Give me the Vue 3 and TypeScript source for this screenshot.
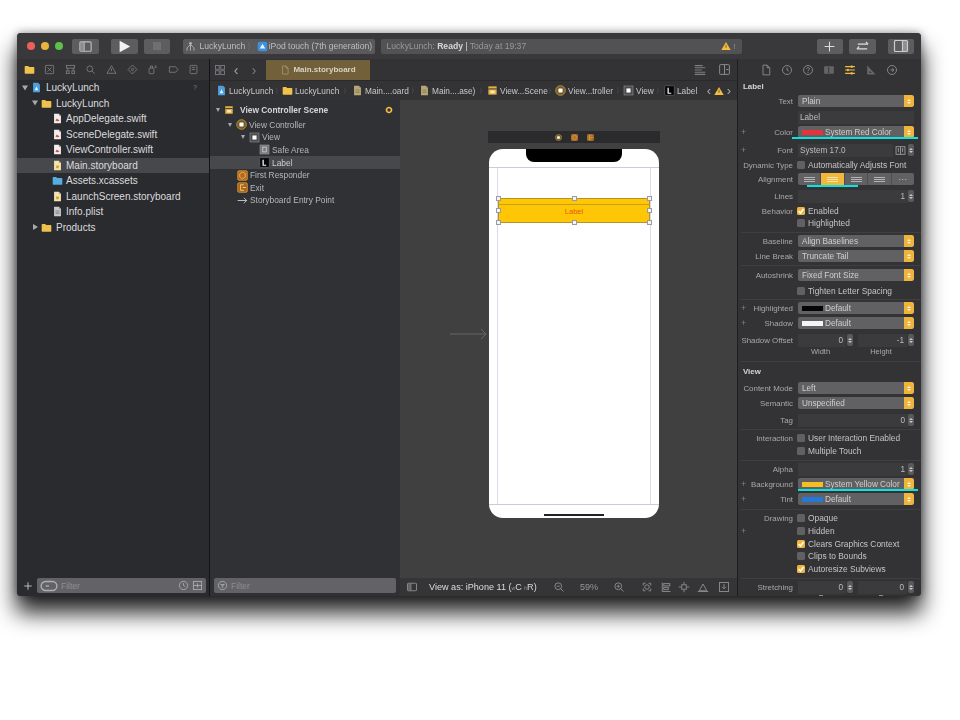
<script setup lang="ts">
import { computed, h } from 'vue'
import type { FunctionalComponent } from 'vue'

const S = 'fill="none" stroke="currentColor" stroke-width="1.2"'
const doc = (c: string, mark: string) =>
  `<path d="M3 1h7l3 3v11H3z" fill="${c}"/><path d="M10 1v3h3z" fill="#888"/>${mark}`
const ICONS: Record<string, string> = {
  folder: '<path d="M1 4a1 1 0 011-1h4l1.5 1.5H14a1 1 0 011 1V13a1 1 0 01-1 1H2a1 1 0 01-1-1z" fill="#f1c14d"/>',
  assets: '<path d="M1 4a1 1 0 011-1h4l1.5 1.5H14a1 1 0 011 1V13a1 1 0 01-1 1H2a1 1 0 01-1-1z" fill="#57ace0"/>',
  proj: doc('#4a9fe0', '<path d="M8 6l2.6 6H5.4z" fill="#e6f2fb"/>'),
  swift: doc('#f2eeee', '<path d="M5 11c2 1.5 5 1 6-1-1 .3-3-1-4-2z" fill="#dd4a3a"/>'),
  board: doc('#f3e3b2', '<rect x="6" y="8" width="4" height="4" fill="#d8a520"/>'),
  plist: doc('#c9c9cb', '<path d="M5 7h6M5 9h6M5 11h6" stroke="#777"/>'),
  docg: doc('#b9a877', '<path d="M5 7h6M5 9h6M5 11h6" stroke="#8a7a50"/>'),
  scene: '<rect x="2" y="2" width="12" height="12" fill="#e6b23f"/><rect x="2" y="5" width="12" height="1.5" fill="#3a3a3c"/><rect x="5" y="8" width="6" height="4" fill="#f7e9bf"/>',
  vc: '<circle cx="8" cy="8" r="7" fill="#6e5a2a" stroke="#e2ad3a"/><rect x="5" y="5" width="6" height="6" rx="1" fill="#fff"/>',
  view: '<rect x="1.5" y="1.5" width="13" height="13" fill="#4b4b4e" stroke="#8b8b8e"/><rect x="5" y="5" width="6" height="6" fill="#fff"/>',
  safe: '<rect x="1.5" y="1.5" width="13" height="13" fill="#77777a" stroke="#99999c"/><rect x="5.5" y="4.5" width="5" height="7" fill="none" stroke="#e5e5e5"/>',
  lab: '<rect x="1" y="1" width="14" height="14" rx="1" fill="#050505" stroke="#666"/><path d="M6 4v8h4.5" fill="none" stroke="#fff" stroke-width="1.8"/>',
  resp: '<rect x="1" y="1" width="14" height="14" rx="2" fill="#b5691d" stroke="#e8a63a"/><path d="M8 3l4 2.3v5L8 13l-4-2.7v-5z" fill="none" stroke="#f5c77a"/>',
  exit: '<rect x="1" y="1" width="14" height="14" rx="2" fill="#a9641a" stroke="#e8a63a"/><path d="M10 4H5v8h5M8 8h5" fill="none" stroke="#f5d08a" stroke-width="1.3"/>',
  arrow: '<path d="M1 8h13M10 4l4 4-4 4" fill="none" stroke="#cfcfcf" stroke-width="1.3"/>',
  warn: '<path d="M8 1.5L15.5 14.5H.5z" fill="#f3bd3d"/><rect x="7.4" y="6" width="1.2" height="5" fill="#5b4510"/>',
  hammer: '<path d="M8 2v3M8 5L3 10v4M8 5l5 5v4M8 5v9" fill="none" stroke="#b5b5b7" stroke-width="1.3"/><rect x="6" y="2" width="4" height="3" fill="#b5b5b7"/>',
  device: '<rect x="1" y="1" width="14" height="14" rx="3" fill="#3e8fdc"/><path d="M4 11l4-7 4 7z" fill="#e6f1fb"/>',
  sidebar: `<rect x="2" y="3" width="12" height="10" rx="1" ${S}/><path d="M6.5 3v10" ${S}/><rect x="2.6" y="3.6" width="3.4" height="8.8" fill="currentColor" opacity=".5"/>`,
  insp: `<rect x="1.5" y="2.5" width="13" height="11" rx="1" ${S}/><path d="M9.5 2.5v11" ${S}/><rect x="10" y="3" width="4" height="10" fill="currentColor" opacity=".45"/>`,
  swap: `<path d="M2 10.5h11M2 10.5l2.5-2.5M14 5.5H3M14 5.5L11.5 3" ${S}/>`,
  plus: `<path d="M8 2v12M2 8h12" fill="none" stroke="currentColor" stroke-width="1.3"/>`,
  xbox: `<rect x="2" y="2" width="12" height="12" rx="1" ${S}/><path d="M5 5l6 6M11 5l-6 6" ${S}/>`,
  tree: `<rect x="2" y="2" width="12" height="4" ${S}/><rect x="2" y="10" width="4" height="4" ${S}/><rect x="10" y="10" width="4" height="4" ${S}/><path d="M4 6v4M12 6v4" ${S}/>`,
  search: `<circle cx="7" cy="7" r="4.2" ${S}/><path d="M10 10l4 4" ${S}/>`,
  tri: `<path d="M8 2.5L14.5 13.5H1.5z" ${S}/><path d="M8 6.5v4" ${S}/>`,
  dia: `<path d="M8 1.5L14.5 8 8 14.5 1.5 8z" ${S}/><circle cx="8" cy="8" r="1.6" ${S}/>`,
  spray: `<rect x="3" y="6" width="7" height="8" rx="1" ${S}/><path d="M5 6V3h3v3M11 3h3M11 5h3" ${S}/>`,
  tag: `<path d="M2 4h9l3.5 4-3.5 4H2z" ${S}/>`,
  list: `<rect x="3" y="2" width="10" height="12" rx="1.5" ${S}/><path d="M5.5 5h5M5.5 8h5" ${S}/>`,
  grid: `<rect x="2" y="2" width="5" height="5" ${S}/><rect x="9" y="2" width="5" height="5" ${S}/><rect x="2" y="9" width="5" height="5" ${S}/><rect x="9" y="9" width="5" height="5" ${S}/>`,
  lines: `<path d="M2 3h9M2 5.5h12M2 8h8M2 10.5h12M2 13h12" ${S}/>`,
  addpane: `<rect x="2" y="2" width="12" height="12" rx="1" ${S}/><path d="M8 2v12M10 8h3" ${S}/>`,
  file: `<path d="M4 1.5h5.5L13 5v9.5H4z" ${S}/><path d="M9.5 1.5V5H13" ${S}/>`,
  clock: `<circle cx="8" cy="8" r="6" ${S}/><path d="M8 4.5V8l2.5 1.5" ${S}/>`,
  help: `<circle cx="8" cy="8" r="6" ${S}/><path d="M6.3 6.5a1.8 1.8 0 113 1.3c-.8.6-1.3.8-1.3 1.8M8 11v1" ${S}/>`,
  idcard: '<rect x="1.5" y="3" width="13" height="10" rx="1" fill="currentColor" opacity=".55"/><rect x="7" y="4" width="1.2" height="8" fill="#333"/>',
  sliders: '<path d="M1.5 3.5h13M1.5 8h13M1.5 12.5h13" stroke="#f0bc45" stroke-width="1.6"/><rect x="9" y="2" width="2.4" height="3" fill="#f0bc45"/><rect x="4" y="6.5" width="2.4" height="3" fill="#f0bc45"/><rect x="9" y="11" width="2.4" height="3" fill="#f0bc45"/>',
  ruler: '<path d="M3 2v12h11z" fill="currentColor" opacity=".6"/><path d="M6 9v3h3z" fill="#333"/>',
  conn: `<circle cx="8" cy="8" r="6" ${S}/><path d="M10.5 8H6M8 5.8L10.5 8 8 10.2" ${S}/>`,
  scope: `<path d="M3 6V3h3M10 3h3v3M13 10v3h-3M6 13H3v-3" ${S}/><circle cx="8" cy="8" r="3" ${S}/>`,
  zoomm: `<circle cx="7" cy="7" r="4.5" ${S}/><path d="M10.2 10.2L14 14M5 7h4" ${S}/>`,
  zoomp: `<circle cx="7" cy="7" r="4.5" ${S}/><path d="M10.2 10.2L14 14M5 7h4M7 5v4" ${S}/>`,
  align: `<path d="M3 2v12h11" ${S}/><rect x="5" y="3.5" width="8" height="3" ${S}/><rect x="5" y="8.5" width="6" height="3" ${S}/>`,
  pin: `<rect x="5" y="5" width="6" height="6" ${S}/><path d="M8 1v3M8 12v3M1 8h3M12 8h3" ${S}/>`,
  tri2: `<path d="M8 4l-5 9h10z" ${S}/><path d="M1 14h14" ${S}/>`,
  embed: `<rect x="2" y="2" width="12" height="12" ${S}/><path d="M8 4v6M5.5 7.8L8 10.3l2.5-2.5" ${S}/>`,
  filter: `<circle cx="8" cy="8" r="6" ${S}/><path d="M5 6.5h6M6 8.5h4M7 10.5h2" ${S}/>`,
  pill: `<rect x="1" y="4" width="14" height="8" rx="4" ${S}/><path d="M5 8h3" ${S}/>`,
  split: `<rect x="2" y="2" width="12" height="12" ${S}/><path d="M2 8h12M8 5v6" ${S}/>`,
  dotY: '<circle cx="8" cy="8" r="5" fill="none" stroke="#f0bc45" stroke-width="3.4"/>',
  tApart: `<rect x="1.5" y="2.5" width="13" height="11" ${S}/><path d="M8 2.5v11M4 5.5h2M5 5.5v5M10 5.5h2M11 5.5v5" ${S}/>`
}
const Ic: FunctionalComponent<{ name: string; size?: number }> = (p) =>
  h('svg', {
    class: 'ic',
    width: p.size ?? 11,
    height: p.size ?? 11,
    viewBox: '0 0 16 16',
    innerHTML: ICONS[p.name]
  })
Ic.props = ['name', 'size']

const navTabs = ['folder', 'xbox', 'tree', 'search', 'tri', 'dia', 'spray', 'tag', 'list']
const tree = [
  { d: 0, tri: 'open', icon: 'proj', text: 'LuckyLunch' },
  { d: 1, tri: 'open', icon: 'folder', text: 'LuckyLunch' },
  { d: 2, icon: 'swift', text: 'AppDelegate.swift' },
  { d: 2, icon: 'swift', text: 'SceneDelegate.swift' },
  { d: 2, icon: 'swift', text: 'ViewController.swift' },
  { d: 2, icon: 'board', text: 'Main.storyboard', sel: true },
  { d: 2, icon: 'assets', text: 'Assets.xcassets' },
  { d: 2, icon: 'board', text: 'LaunchScreen.storyboard' },
  { d: 2, icon: 'plist', text: 'Info.plist' },
  { d: 1, tri: 'closed', icon: 'folder', text: 'Products' }
]
const jump = [
  { icon: 'proj', text: 'LuckyLunch', w: 45, c: 8 },
  { icon: 'folder', text: 'LuckyLunch', w: 46, c: 11 },
  { icon: 'docg', text: 'Main....oard', w: 45, c: 9 },
  { icon: 'docg', text: 'Main....ase)', w: 45, c: 10 },
  { icon: 'scene', text: 'View...Scene', w: 47, c: 8 },
  { icon: 'vc', text: 'View...troller', w: 47, c: 8 },
  { icon: 'view', text: 'View', w: 18, c: 10 },
  { icon: 'lab', text: 'Label', w: 22, c: 5 }
]
const outline = [
  { pad: 6, tri: true, icon: 'scene', text: 'View Controller Scene', cls: 'head', h: 17 },
  { pad: 18, tri: true, icon: 'vc', text: 'View Controller', h: 13 },
  { pad: 31, tri: true, icon: 'view', text: 'View', h: 12.5 },
  { pad: 49, icon: 'safe', text: 'Safe Area', h: 12.5 },
  { pad: 49, icon: 'lab', text: 'Label', sel: true, h: 13 },
  { pad: 27, icon: 'resp', text: 'First Responder', h: 12.5 },
  { pad: 27, icon: 'exit', text: 'Exit', h: 12.5 },
  { pad: 27, icon: 'arrow', text: 'Storyboard Entry Point', h: 12.5 }
]
const inspTabs = ['file', 'clock', 'help', 'idcard', 'sliders', 'ruler', 'conn']
const handles = ['tl', 'tc', 'tg', 'ml', 'mg', 'bl', 'bc', 'bg']
const barRight = ['scope', 'align', 'pin', 'tri2', 'embed']

type Row = {
  y: number
  kind: string
  label?: string
  plus?: boolean
  text?: string
  on?: boolean
  swatch?: string
  a?: string
  b?: string
}
const raw: Row[] = [
  { y: 86, kind: 'head', text: 'Label' },
  { y: 101, kind: 'popup', label: 'Text', text: 'Plain' },
  { y: 117, kind: 'field', text: 'Label' },
  { y: 132, kind: 'popup', label: 'Color', plus: true, swatch: '#e6333b', text: 'System Red Color' },
  { y: 150, kind: 'font', label: 'Font', plus: true, text: 'System 17.0' },
  { y: 165, kind: 'check', label: 'Dynamic Type', text: 'Automatically Adjusts Font' },
  { y: 179, kind: 'seg', label: 'Alignment' },
  { y: 196, kind: 'num', label: 'Lines', text: '1' },
  { y: 211, kind: 'check', label: 'Behavior', on: true, text: 'Enabled' },
  { y: 223, kind: 'check', text: 'Highlighted' },
  { y: 232, kind: 'sep' },
  { y: 241, kind: 'popup', label: 'Baseline', text: 'Align Baselines' },
  { y: 256, kind: 'popup', label: 'Line Break', text: 'Truncate Tail' },
  { y: 265, kind: 'sep' },
  { y: 275, kind: 'popup', label: 'Autoshrink', text: 'Fixed Font Size' },
  { y: 291, kind: 'check', text: 'Tighten Letter Spacing' },
  { y: 299, kind: 'sep' },
  { y: 308, kind: 'popup', label: 'Highlighted', plus: true, swatch: '#050505', text: 'Default' },
  { y: 323, kind: 'popup', label: 'Shadow', plus: true, swatch: '#f4f4f4', text: 'Default' },
  { y: 340, kind: 'double', label: 'Shadow Offset', a: '0', b: '-1' },
  { y: 351, kind: 'sub', a: 'Width', b: 'Height' },
  { y: 361, kind: 'sep' },
  { y: 371, kind: 'head', text: 'View' },
  { y: 388, kind: 'popup', label: 'Content Mode', text: 'Left' },
  { y: 403, kind: 'popup', label: 'Semantic', text: 'Unspecified' },
  { y: 420, kind: 'num', label: 'Tag', text: '0' },
  { y: 429, kind: 'sep' },
  { y: 438, kind: 'check', label: 'Interaction', text: 'User Interaction Enabled' },
  { y: 451, kind: 'check', text: 'Multiple Touch' },
  { y: 460, kind: 'sep' },
  { y: 469, kind: 'num', label: 'Alpha', text: '1' },
  { y: 484, kind: 'popup', label: 'Background', plus: true, swatch: '#f5bf22', text: 'System Yellow Color' },
  { y: 499, kind: 'popup', label: 'Tint', plus: true, swatch: '#2678d8', text: 'Default' },
  { y: 509, kind: 'sep' },
  { y: 518, kind: 'check', label: 'Drawing', text: 'Opaque' },
  { y: 531, kind: 'check', plus: true, label: ' ', text: 'Hidden' },
  { y: 544, kind: 'check', on: true, text: 'Clears Graphics Context' },
  { y: 556, kind: 'check', text: 'Clips to Bounds' },
  { y: 569, kind: 'check', on: true, text: 'Autoresize Subviews' },
  { y: 578, kind: 'sep' },
  { y: 587, kind: 'double', label: 'Stretching', a: '0', b: '0' },
  { y: 596, kind: 'ticks' }
]
// Rows are 10px tall (1px for rules); each row's gap comes from its centre line in the inspector.
const rows = computed(() => {
  let bottom = 80
  return raw.map((r) => {
    const height = r.kind === 'sep' ? 1 : 10
    const top = r.kind === 'sep' ? r.y : r.y - 5
    const marginTop = top - bottom
    bottom = top + height
    return { ...r, gap: `${marginTop}px` }
  })
})
</script>

<template>
  <div class="page">
    <div class="win">
      <header class="bar">
        <span class="light red"></span><span class="light amber"></span><span class="light green"></span>
        <button class="tb side"><Ic name="sidebar" :size="15" /></button>
        <button class="tb play"><svg width="13" height="13" viewBox="0 0 16 16"><path d="M2 1l13 7-13 7z" fill="#f2f2f2" /></svg></button>
        <button class="tb stop"><span class="stopsq"></span></button>
        <div class="scheme">
          <Ic name="hammer" :size="11" /><span class="st1">LuckyLunch</span><span class="chev">〉</span>
          <Ic name="device" :size="11" /><span class="st2">iPod touch (7th generation)</span>
        </div>
        <div class="status">
          <span>LuckyLunch: <b>Ready</b> <b class="pipe">|</b> Today at 19:37</span>
          <span class="grow"></span><Ic name="warn" :size="10" /><span class="one">!</span>
        </div>
        <button class="tb add"><Ic name="plus" :size="13" /></button>
        <button class="tb swap"><Ic name="swap" :size="15" /></button>
        <button class="tb ins"><Ic name="insp" :size="16" /></button>
      </header>

      <div class="main">
        <aside class="nav">
          <div class="navtabs"><span v-for="n in navTabs" :key="n" class="navtab"><Ic :name="n" :size="11" /></span></div>
          <div class="tree">
            <div v-for="(r, i) in tree" :key="i" class="row" :class="[`d${r.d}`, { sel: r.sel }]">
              <span class="tw" :class="r.tri"></span><Ic :name="r.icon" :size="11" /><span class="tt">{{ r.text }}</span>
              <span v-if="i === 0" class="q">?</span>
            </div>
          </div>
          <div class="foot navfoot">
            <Ic class="fplus" name="plus" :size="10" />
            <div class="filt grow2"><Ic name="pill" :size="18" /><span class="ph">Filter</span><span class="grow"></span><Ic name="clock" :size="11" /><Ic name="split" :size="11" /></div>
          </div>
        </aside>

        <section class="ed">
          <div class="tabs">
            <Ic name="grid" :size="12" /><span class="arr l">‹</span><span class="arr r">›</span>
            <div class="tab"><Ic name="file" :size="10" /><span>Main.storyboard</span></div>
            <span class="grow"></span><Ic name="lines" :size="14" /><Ic class="pane" name="addpane" :size="13" />
          </div>
          <div class="jump">
            <template v-for="(j, i) in jump" :key="i">
              <Ic :name="j.icon" :size="11" /><span class="jt" :style="{ width: `${j.w}px` }">{{ j.text }}</span><span class="jc" :style="{ width: `${j.c}px` }"><template v-if="i < jump.length - 1">〉</template></span>
            </template>
            <span class="jarr">‹</span><Ic name="warn" :size="10" /><span class="jarr">›</span>
          </div>
          <div class="split">
            <div class="out">
              <div class="outrows">
                <div v-for="r in outline" :key="r.text" class="or" :class="[r.cls, { sel: r.sel }]" :style="{ height: `${r.h}px`, paddingLeft: `${r.pad}px` }">
                  <span v-if="r.tri" class="ot"></span><Ic :name="r.icon" :size="r.pad === 6 ? 10 : 11" /><span class="ol">{{ r.text }}</span>
                  <span v-if="r.cls" class="grow"></span><Ic v-if="r.cls" class="dot" name="dotY" :size="8" />
                </div>
              </div>
              <div class="foot outfoot"><div class="filt grow2"><Ic name="filter" :size="11" /><span class="ph">Filter</span></div></div>
            </div>
            <div class="cv">
              <div class="stage">
                <div class="scenebar">
                  <Ic name="vc" :size="7" /><Ic name="resp" :size="7" /><Ic name="exit" :size="7" />
                </div>
                <div class="phone">
                  <div class="notch"></div>
                  <div class="safeh">
                    <div class="safev">
                      <div class="lbl">
                        <span class="lbltxt">Label</span>
                        <i v-for="p in handles" :key="p" class="hd" :class="p"></i>
                      </div>
                    </div>
                  </div>
                  <div class="home"></div>
                </div>
                <svg class="entry" width="38" height="12" viewBox="0 0 38 12"><path d="M0 6h36M31 1l5 5-5 5" fill="none" stroke="#666" /></svg>
              </div>
              <div class="cbar">
                <Ic name="sidebar" :size="12" />
                <span class="viewas">View as: iPhone 11 (<small>w</small>C <small>h</small>R)</span>
                <Ic class="zm" name="zoomm" :size="12" /><span class="pct">59%</span><Ic class="zp" name="zoomp" :size="12" />
                <span class="cright"><Ic v-for="n in barRight" :key="n" :name="n" :size="12" /></span>
              </div>
            </div>
          </div>
        </section>

        <aside class="insp">
          <div class="itabs"><span v-for="n in inspTabs" :key="n" class="itab"><Ic :name="n" :size="12" /></span></div>
          <div class="irows">
            <template v-for="(r, i) in rows" :key="i">
              <div v-if="r.kind === 'sep'" class="rule" :style="{ marginTop: r.gap }"></div>
              <div v-else-if="r.kind === 'head'" class="irow ihead" :style="{ marginTop: r.gap }">{{ r.text }}</div>
              <div v-else class="irow" :style="{ marginTop: r.gap }">
                <span class="ilab"><span v-if="r.plus" class="iplus">+</span><span class="grow"></span>{{ r.label }}</span>
                <div v-if="r.kind === 'popup'" class="ctl popup">
                  <span v-if="r.swatch" class="sw" :style="{ background: r.swatch }"></span>
                  <span class="ptext">{{ r.text }}</span><span class="grow"></span>
                  <span class="stepy"><i></i><i class="dn"></i></span>
                </div>
                <div v-else-if="r.kind === 'field'" class="ctl field">{{ r.text }}</div>
                <div v-else-if="r.kind === 'font'" class="ctl fontrow">
                  <span class="field ffield">{{ r.text }}</span><Ic class="tap" name="tApart" :size="11" /><span class="step"><i></i><i class="dn"></i></span>
                </div>
                <div v-else-if="r.kind === 'check'" class="ctl chk">
                  <span class="box" :class="{ on: r.on }"><svg v-if="r.on" width="8" height="8" viewBox="0 0 16 16"><path d="M3 8l4 4 6-8" fill="none" stroke="#fff" stroke-width="3" /></svg></span>{{ r.text }}
                </div>
                <div v-else-if="r.kind === 'seg'" class="ctl seg">
                  <span v-for="n in 5" :key="n" class="cell" :class="{ act: n === 2 }"><i v-if="n < 5" class="gly"></i><i v-else class="dots">···</i></span>
                </div>
                <div v-else-if="r.kind === 'num'" class="ctl numrow">
                  <span class="field nf">{{ r.text }}</span><span class="step"><i></i><i class="dn"></i></span>
                </div>
                <div v-else-if="r.kind === 'double'" class="ctl dbl">
                  <span class="field nf">{{ r.a }}</span><span class="step"><i></i><i class="dn"></i></span>
                  <span class="field nf second">{{ r.b }}</span><span class="step"><i></i><i class="dn"></i></span>
                </div>
                <div v-else-if="r.kind === 'sub'" class="ctl subs"><span class="s1">{{ r.a }}</span><span class="s2">{{ r.b }}</span></div>
                <div v-else-if="r.kind === 'ticks'" class="ctl subs"><span class="s1"><i class="tick"></i></span><span class="s2"><i class="tick"></i></span></div>
              </div>
            </template>
          </div>
        </aside>
      </div>
    </div>
    <i class="cy c1"></i><i class="cy c2"></i><i class="cy c3"></i>
  </div>
</template>

<style>
html, body { margin: 0; background: #fff; }
</style>

<style scoped>
.page { position: relative; width: 960px; height: 720px; box-sizing: border-box; padding: 33px 39px 0 17px; overflow: hidden; background: #fff; font-family: "Liberation Sans", Arial, sans-serif; }
.shadowless { box-shadow: none; }
.win { width: 904px; height: 563px; display: flex; flex-direction: column; background: #333; border-radius: 4px; overflow: hidden; box-shadow: 0 16px 22px 1px rgba(0,0,0,.85), 0 0 8px rgba(0,0,0,.4); color: #d6d6d8; }
.bar, .main { filter: blur(.45px); }
button { border: 0; padding: 0; font: inherit; }
.grow { flex: 1; }
.ic { display: block; flex: none; }

.bar { height: 26px; flex: none; display: flex; align-items: center; padding-left: 9.5px; background: #39393b; box-sizing: border-box; }
.light { width: 8.5px; height: 8.5px; border-radius: 50%; margin-right: 5.5px; flex: none; }
.red { background: #ee5f5a; } .amber { background: #e8b53e; } .green { background: #5cc24a; }
.tb { height: 15px; background: #5d5d5f; border-radius: 2px; color: #bdbdbf; display: flex; align-items: center; justify-content: center; flex: none; }
.side { width: 27px; margin-left: 3px; }
.play { width: 27px; margin-left: 12px; }
.stop { width: 26px; margin-left: 6px; }
.stopsq { width: 8px; height: 8px; background: #6f6f71; }
.scheme { width: 192px; height: 15px; margin-left: 13px; background: #5a5a5c; border-radius: 2px; display: flex; align-items: center; box-sizing: border-box; padding-left: 2px; font-size: 8.6px; color: #bdbdbf; flex: none; white-space: nowrap; }
.st1 { margin-left: 4px; width: 46px; }
.chev { width: 11px; font-size: 8px; text-align: center; color: #8a8a8c; }
.st2 { margin-left: 1px; }
.status { width: 361px; height: 15px; margin-left: 6px; background: #525254; border-radius: 2px; display: flex; align-items: center; box-sizing: border-box; padding: 0 3px 0 6px; font-size: 8.6px; color: #98989a; flex: none; white-space: nowrap; }
.status b { color: #d8d8da; } .status .pipe { font-weight: 400; }
.one { width: 8px; text-align: center; font-size: 7px; }
.add { width: 26px; margin-left: 75px; color: #ddd; }
.swap { width: 27px; margin-left: 6px; color: #ddd; }
.ins { width: 26px; margin-left: 12px; color: #ccc; }

.main { flex: 1; display: flex; min-height: 0; }
.nav { width: 192px; flex: none; display: flex; flex-direction: column; background: #2a2b2f; border-right: 1px solid #141416; }
.navtabs { height: 21px; flex: none; display: flex; align-items: center; padding-left: 6.5px; background: #333336; color: #808083; }
.navtab { width: 21px; display: flex; justify-content: flex-start; }
.tree { flex: 1; font-size: 10px; color: #dcdcde; }
.row { height: 15.5px; display: flex; align-items: center; white-space: nowrap; }
.row.sel { background: #47484b; }
.d0 { padding-left: 5px; } .d1 { padding-left: 15px; } .d2 { padding-left: 35px; }
.tw { height: 0; flex: none; width: 9px; }
.tw.open::before { content: ""; display: block; width: 0; height: 0; border-left: 3px solid transparent; border-right: 3px solid transparent; border-top: 5px solid #a9a9ab; transform: translateY(-2.5px); }
.tw.closed::before { content: ""; display: block; width: 0; height: 0; border-top: 3px solid transparent; border-bottom: 3px solid transparent; border-left: 5px solid #a9a9ab; transform: translate(1px,-3px); }
.tt { margin-left: 4px; }
.d2 .tt { margin-left: 3px; }
.d2 .tw { display: none; }
.q { margin-left: auto; margin-right: 12px; font-size: 7px; color: #7c7c7e; }
.foot { height: 18px; flex: none; display: flex; align-items: flex-start; box-sizing: border-box; }
.navfoot { padding: 0 3px 0 6px; background: #2a2b2f; }
.fplus { color: #d8d8d8; margin: 3px 4px 0 0; }
.filt { height: 15px; background: #636366; border-radius: 2px; display: flex; align-items: center; gap: 3px; padding: 0 3px; font-size: 8.5px; color: #8e8e91; box-sizing: border-box; }
.filt .ic { color: #b0b0b3; }
.grow2 { flex: 1; }
.ph { color: #8f8f92; }

.ed { flex: 1; min-width: 0; display: flex; flex-direction: column; border-right: 1px solid #1e1e20; }
.tabs { height: 21px; flex: none; display: flex; align-items: center; padding: 0 6px 0 4px; background: #333336; color: #7d7d80; }
.arr { font-size: 14px; line-height: 12px; text-align: center; }
.arr.l { width: 16px; margin-left: 2px; color: #a8a8aa; } .arr.r { width: 16px; margin-left: 2px; }
.tab { width: 104px; height: 20px; margin-left: 4px; background: #72603a; display: flex; align-items: center; justify-content: center; gap: 3px; font-size: 8px; font-weight: 700; color: #d8d2c2; flex: none; }
.tab .ic { color: #a99a78; }
.pane { margin-left: 11px; color: #8e8e91; }
.jump { height: 20px; flex: none; display: flex; align-items: center; padding-left: 6px; background: #333336; font-size: 8.3px; color: #c8c8ca; white-space: nowrap; border-top: 1px solid #2a2a2c; box-sizing: border-box; }
.jt { margin-left: 2px; flex: none; }
.jc { font-size: 7px; text-align: center; color: #7c7c7e; flex: none; overflow: hidden; }
.jarr { width: 10px; text-align: center; font-size: 13px; line-height: 12px; color: #a8a8aa; flex: none; }
.split { flex: 1; display: flex; min-height: 0; }
.out { width: 190px; flex: none; display: flex; flex-direction: column; background: #303134; }
.outrows { flex: 1; padding-top: 1px; font-size: 8.4px; color: #b7b7b9; }
.or { display: flex; align-items: center; white-space: nowrap; box-sizing: border-box; }
.or.sel { background: #47484b; color: #d0d0d2; }
.or.head { font-weight: 700; color: #d6d6d8; padding-right: 7px; }
.ot { width: 8px; flex: none; }
.ot::before { content: ""; display: block; width: 0; height: 0; border-left: 2.5px solid transparent; border-right: 2.5px solid transparent; border-top: 4px solid #a9a9ab; }
.ol { margin-left: 2px; }
.head .ol { margin-left: 6px; }
.outfoot { padding: 0 4px; background: #303134; }
.cv { flex: 1; min-width: 0; display: flex; flex-direction: column; background: #404041; }
.stage { flex: 1; position: relative; box-sizing: border-box; padding: 31px 0 0 88px; min-height: 0; }
.scenebar { width: 172px; height: 12px; background: #2b2b2d; display: flex; align-items: center; justify-content: center; gap: 9px; }
.phone { width: 170px; height: 369px; margin: 6px 0 0 1px; background: #fff; border-radius: 14px; display: flex; flex-direction: column; overflow: hidden; }
.notch { width: 96px; height: 13px; margin: 0 auto; background: #000; border-radius: 0 0 8px 8px; flex: none; }
.safeh { height: 338px; margin-top: 5px; border-top: 1px solid #c9cbe2; border-bottom: 1px solid #c9cbe2; flex: none; box-sizing: border-box; }
.safev { height: 100%; margin: 0 8px; border-left: 1px solid #d9dbea; border-right: 1px solid #d9dbea; box-sizing: border-box; padding-top: 30px; }
.lbl { position: relative; height: 25px; background: #fec605; border: 1px solid #b5932c; box-sizing: border-box; display: flex; align-items: center; justify-content: center; }
.lbl::before { content: ""; position: absolute; left: 0; right: 0; top: 5px; height: 1px; background: #c89f18; }
.lbltxt { font-size: 7.5px; color: #ea5a12; margin-top: 1px; }
.hd { position: absolute; width: 5px; height: 5px; background: #f4f4f4; border: 1px solid #9a9aa4; box-sizing: border-box; }
.tl, .ml, .bl { left: -3px; }
.tc, .bc { left: calc(50% - 2.5px); }
.tg, .mg, .bg { right: -3px; }
.tl, .tc, .tg { top: -3px; }
.ml, .mg { top: calc(50% - 2.5px); }
.bl, .bc, .bg { bottom: -3px; }
.home { width: 60px; height: 2px; margin: 9px auto 0; background: #222; flex: none; }
.entry { position: absolute; left: 50px; top: 228px; }
.cbar { height: 18px; flex: none; display: flex; align-items: center; background: #353537; color: #8f8f92; padding-left: 6px; box-sizing: border-box; font-size: 9.1px; }
.viewas { margin-left: 11px; color: #dcdcde; white-space: nowrap; width: 113px; flex: none; }
.viewas small { font-size: 5px; color: #999; }
.zm { margin-left: 11px; }
.pct { margin-left: 15px; width: 19px; flex: none; color: #98989a; }
.zp { margin-left: 14px; }
.cright { margin-left: 16px; display: flex; gap: 6.7px; }
.cright .ic:last-child { margin-left: 2px; }

.insp { width: 183px; flex: none; display: flex; flex-direction: column; background: #333336; overflow: hidden; }
.itabs { height: 21px; flex: none; display: flex; align-items: center; padding-left: 22px; color: #8c8c8f; }
.itab { width: 21px; flex: none; display: block; }
.irows { flex: 1; font-size: 7.9px; color: #a9a9ab; min-height: 0; }
.irow { height: 10px; display: flex; align-items: center; white-space: nowrap; }
.ihead { padding-left: 5px; font-weight: 700; color: #d6d6d8; }
.rule { height: 1px; margin-left: 3px; background: #3f3f42; }
.ilab { width: 55px; flex: none; display: flex; align-items: center; justify-content: flex-end; color: #a9a9ab; padding-left: 3px; box-sizing: border-box; }
.iplus { color: #7f7f82; font-size: 9px; }
.ctl { width: 116px; margin-left: 5px; height: 13px; flex: none; display: flex; align-items: center; box-sizing: border-box; }
.popup { background: #616164; border-radius: 2px; padding-left: 4px; color: #cfcfd1; font-size: 8.2px; height: 12.5px; overflow: hidden; }
.sw { width: 21px; height: 5px; flex: none; margin-right: 2px; }
.stepy { width: 10px; height: 100%; background: #efb43c; flex: none; border-radius: 0 2px 2px 0; display: flex; flex-direction: column; align-items: center; justify-content: center; gap: 1px; }
.stepy i, .step i { display: block; width: 0; height: 0; border-left: 2px solid transparent; border-right: 2px solid transparent; border-bottom: 2.5px solid #fff4d8; }
.stepy .dn, .step .dn { border-bottom: 0; border-top: 2.5px solid #fff4d8; }
.step { width: 6px; height: 12px; background: #5a5a5d; flex: none; border-radius: 2px; display: flex; flex-direction: column; align-items: center; justify-content: center; gap: 1px; }
.step i { border-bottom-color: #c8c8ca; } .step .dn { border-top-color: #c8c8ca; }
.field { background: #3b3b3e; color: #bdbdbf; padding: 0 3px; font-size: 8.2px; display: flex; align-items: center; height: 13px; box-sizing: border-box; }
.ctl.field { padding-left: 2px; }
.fontrow .ffield { flex: 1; padding-left: 2px; height: 13px; }
.tap { color: #a8a8aa; margin: 0 2px; }
.chk { gap: 3px; color: #c4c4c6; font-size: 8.4px; margin-left: 4px; }
.box { width: 8px; height: 8px; background: #616164; border-radius: 1.5px; flex: none; display: flex; align-items: center; justify-content: center; }
.box.on { background: #efb43c; }
.seg { background: #616164; border-radius: 2px; overflow: hidden; height: 12px; }
.cell { flex: 1; height: 100%; display: flex; align-items: center; justify-content: center; border-right: 1px solid #4e4e50; box-sizing: border-box; }
.cell:last-child { border-right: 0; }
.cell.act { background: #f2b83c; }
.gly { display: block; width: 11px; height: 5px; background: repeating-linear-gradient(#b4b4b6 0 1px, transparent 1px 2px); }
.cell.act .gly { background: repeating-linear-gradient(#f9e3ad 0 1px, transparent 1px 2px); }
.dots { font-style: normal; font-size: 9px; color: #c6c6c8; }
.numrow .nf { flex: 1; justify-content: flex-end; }
.dbl .nf { width: 48px; justify-content: flex-end; flex: none; }
.dbl .second { margin-left: 5px; width: 49px; }
.dbl .step { margin-left: 1px; }
.subs { font-size: 7.5px; color: #a9a9ab; }
.s1 { width: 45px; flex: none; display: flex; justify-content: center; }
.s2 { width: 76px; flex: none; display: flex; justify-content: center; }
.tick { display: block; width: 4px; height: 2px; background: #8d8d90; }

.cy { position: absolute; height: 2px; background: #0be3e3; display: block; }
.c1 { left: 792px; top: 137px; width: 126px; }
.c2 { left: 807px; top: 185px; width: 51px; }
.c3 { left: 798px; top: 489px; width: 120px; }
</style>
